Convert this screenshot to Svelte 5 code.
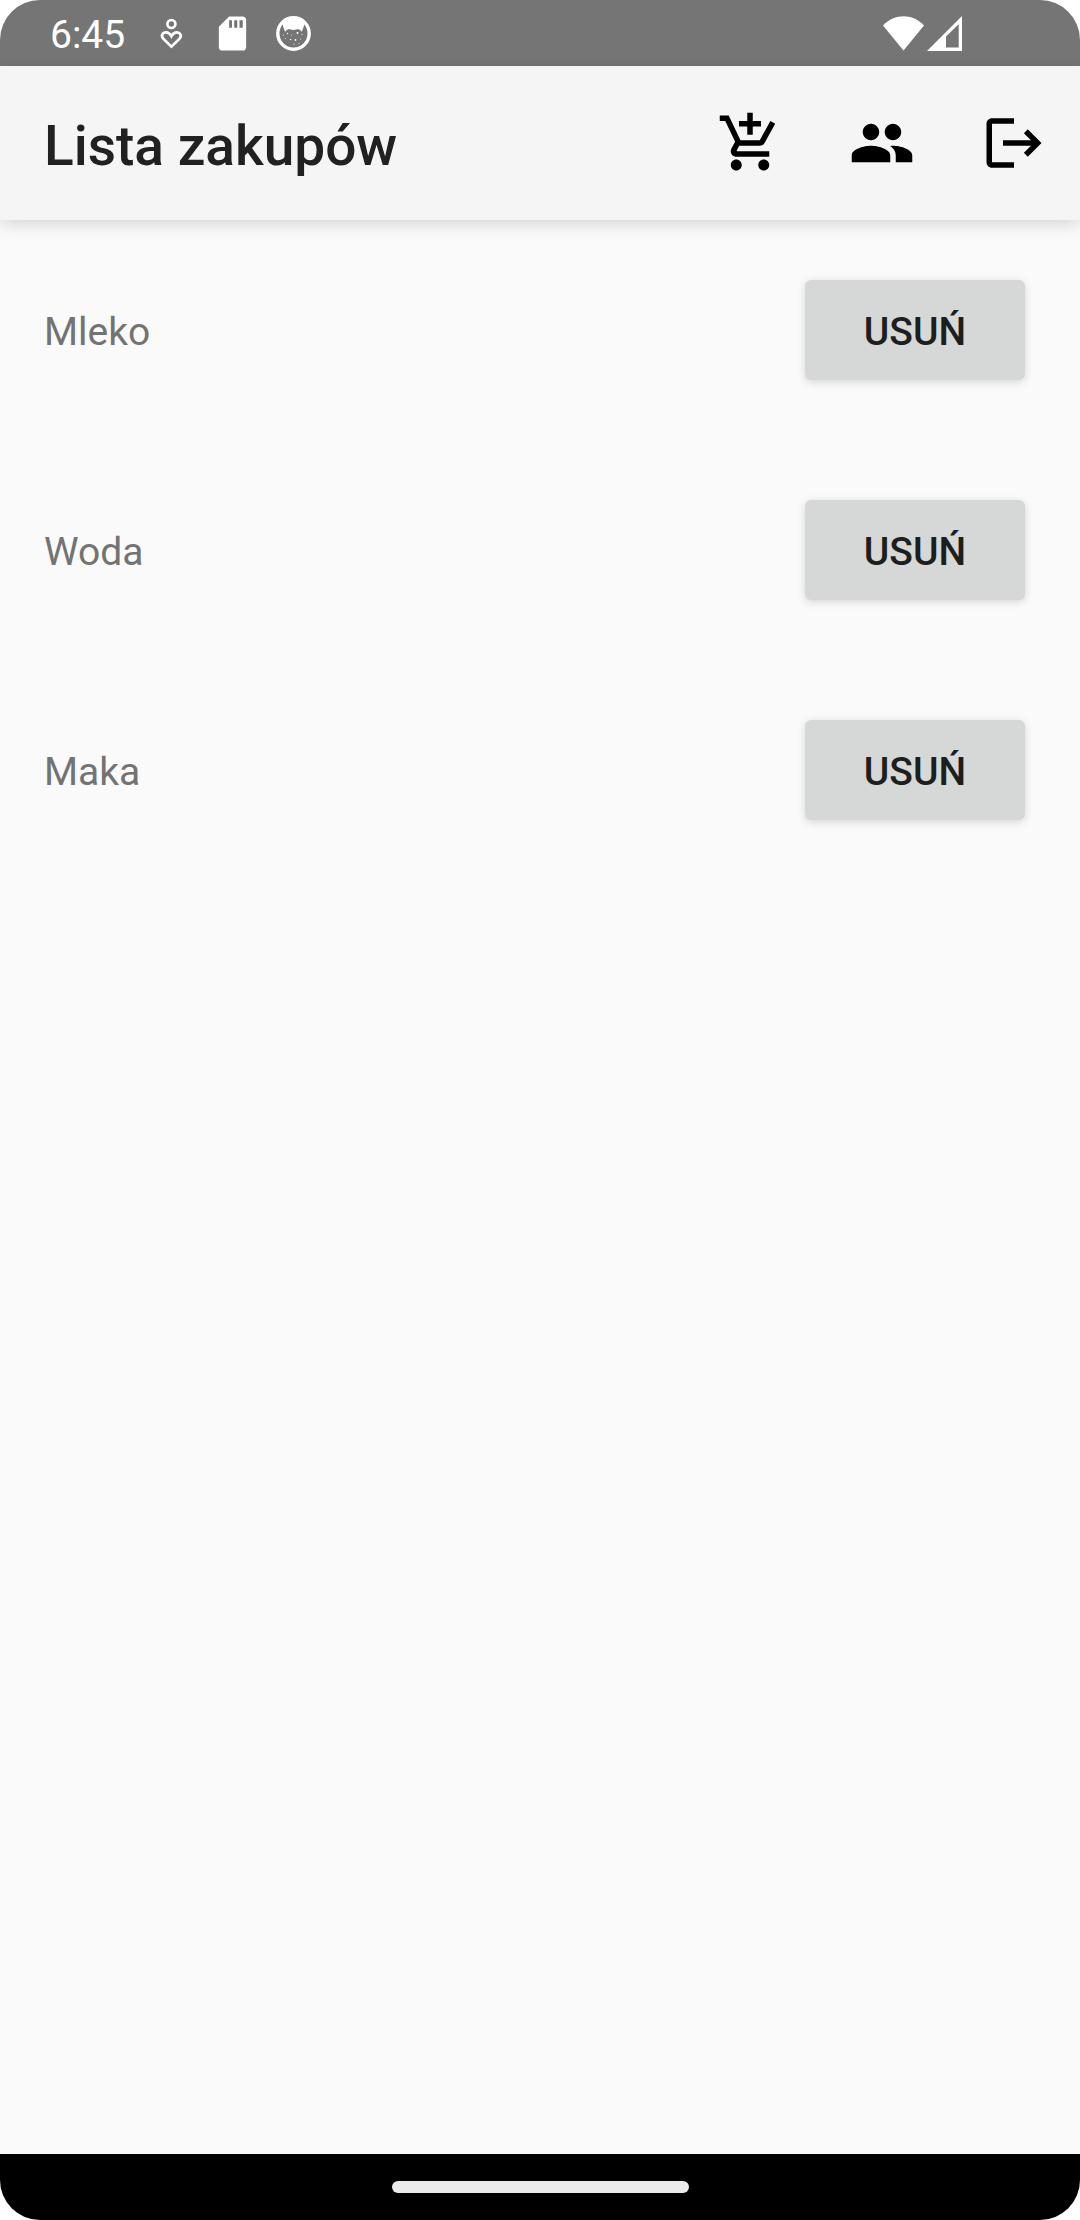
<script>
  let items = $state([
    { id: 1, name: 'Mleko' },
    { id: 2, name: 'Woda' },
    { id: 3, name: 'Maka' }
  ]);

  function remove(id) {
    items = items.filter((item) => item.id !== id);
  }
</script>

<div class="screen">
  <div class="status">
    <time class="clock">6:45</time>
    <div class="notices">
      <svg viewBox="0 0 41 41" aria-hidden="true">
        <g fill="none" stroke="#fff" stroke-width="2.7">
          <circle cx="20.4" cy="11" r="4" />
          <path d="M20.4 33.6L12.2 25.7C9.6 22.500 11.600 19.400 15 19.400C17.400 19.400 19.200 21 20.400 23.200C21.600 21 23.400 19.400 25.800 19.400C29.200 19.400 31.200 22.500 28.600 25.700Z" />
        </g>
      </svg>
      <svg viewBox="0 0 24 24" aria-hidden="true">
        <path fill="#fff" d="M18 2h-8L4 8v12c0 1.100.9 2 2 2h12c1.100 0 2-.9 2-2V4c0-1.100-.9-2-2-2zM11.700 8.700h-1.700V4.300h1.700zM14.800 8.700h-1.800V4.300h1.800zM18 8.700h-1.900V4.300h1.900z" />
      </svg>
      <svg viewBox="0 0 41 41" aria-hidden="true">
        <circle cx="20.500" cy="20.500" r="15.700" fill="none" stroke="#fff" stroke-width="3.400" />
        <path fill="#fff" d="M9.500 11Q10.500 15 12 18.800Q14 16.200 16.500 16L17.500 16.600Q20.500 17.400 23.500 16.600L24.500 16Q27 16.200 28.700 18.800Q30.500 15 31.500 11L26 6H15Z" />
        <g fill="#fff">
          <circle cx="14.500" cy="20.500" r=".7" />
          <circle cx="24.500" cy="20" r="1" />
          <circle cx="18.500" cy="22" r=".5" />
          <circle cx="29" cy="21.500" r=".6" />
          <circle cx="10.500" cy="22" r=".5" />
          <circle cx="12.500" cy="25.500" r=".5" />
          <circle cx="17.500" cy="26.500" r=".7" />
          <circle cx="22.500" cy="27" r=".9" />
          <circle cx="27.500" cy="26" r=".5" />
          <circle cx="21" cy="31" r=".6" />
          <circle cx="26" cy="30.500" r=".5" />
        </g>
      </svg>
    </div>
    <div class="signals">
      <svg class="wifi" viewBox="0 0 41 35" aria-hidden="true">
        <path fill="#fff" d="M20.500 34.500L0 9.500C11.500-2.800 29.500-2.800 41 9.500Z" />
      </svg>
      <svg class="cell" viewBox="0 0 35 35" aria-hidden="true">
        <path fill="#fff" fill-rule="evenodd" d="M0 35L35 0V35ZM19 20.500V31.500H31.700V8.300Z" />
      </svg>
    </div>
  </div>

  <header class="bar">
    <h1>Lista zakupów</h1>
    <button class="action" aria-label="Dodaj produkt">
      <svg viewBox="0 0 24 24" aria-hidden="true">
        <path d="M11 9h2V6h3V4h-3V1h-2v3H8v2h3v3zm-4 9c-1.100 0-1.990.9-1.990 2S5.900 22 7 22s2-.9 2-2-.9-2-2-2zm10 0c-1.100 0-1.990.9-1.990 2s.89 2 1.990 2 2-.9 2-2-.9-2-2-2zm-9.830-3.250l.03-.12.900-1.630h7.450c.75 0 1.410-.41 1.750-1.030l3.860-7.010L19.420 4h-.01l-1.100 2-2.760 5H8.530l-.13-.27L6.160 6l-.95-2-.94-2H1v2h2l3.600 7.590-1.350 2.450c-.16.28-.25.61-.25.96 0 1.100.9 2 2 2h12v-2H7.420c-.13 0-.25-.11-.25-.25z" />
      </svg>
    </button>
    <button class="action" aria-label="Użytkownicy">
      <svg viewBox="0 0 24 24" aria-hidden="true">
        <path d="M16 11c1.660 0 2.990-1.340 2.990-3S17.660 5 16 5s-3 1.340-3 3 1.340 3 3 3zm-8 0c1.660 0 2.990-1.340 2.990-3S9.660 5 8 5 5 6.340 5 8s1.340 3 3 3zm0 2c-2.330 0-7 1.170-7 3.500V19h14v-2.500c0-2.330-4.670-3.500-7-3.500zm8 0c-.29 0-.62.02-.97.05 1.160.84 1.970 1.970 1.970 3.450V19h6v-2.500c0-2.330-4.670-3.500-7-3.500z" />
      </svg>
    </button>
    <button class="action" aria-label="Wyloguj">
      <svg viewBox="0 0 24 24" aria-hidden="true">
        <path d="M17 7l-1.410 1.410L18.170 11H8v2h10.170l-2.580 2.580L17 17l5-5zM4 5h8V3H4c-1.100 0-2 .9-2 2v14c0 1.100.9 2 2 2h8v-2H4V5z" />
      </svg>
    </button>
  </header>

  <main>
    <ul>
      {#each items as item (item.id)}
        <li>
          <span class="name">{item.name}</span>
          <button class="remove" onclick={() => remove(item.id)}>USUŃ</button>
        </li>
      {/each}
    </ul>
  </main>

  <footer>
    <div class="handle"></div>
  </footer>
</div>

<style>
  :global(body) {
    margin: 0;
    background: #fff;
  }

  .screen {
    display: flex;
    flex-direction: column;
    min-height: 100vh;
    border-radius: 40px;
    overflow: hidden;
    background: #fafafa;
    font-family: Roboto, 'Liberation Sans', sans-serif;
    font-size: 39px;
    line-height: 48px;
  }

  svg {
    display: block;
  }

  button {
    border: 0;
    padding: 0;
    font: inherit;
    cursor: pointer;
  }

  .status {
    display: flex;
    align-items: center;
    height: 66px;
    padding: 0 118px 0 50px;
    background: #757575;
    color: #fff;
  }

  .clock,
  .name {
    padding-top: 4px;
  }

  .notices {
    display: flex;
    gap: 20px;
    margin-left: 26px;
  }

  .notices svg {
    width: 41px;
    height: 41px;
  }

  .signals {
    display: flex;
    gap: 3px;
    margin-left: auto;
  }

  .wifi {
    width: 41px;
    height: 35px;
  }

  .cell {
    width: 35px;
    height: 35px;
  }

  .bar {
    display: flex;
    align-items: center;
    height: 154px;
    padding-left: 44px;
    background: #f5f5f5;
    box-shadow: 0 4px 16px rgba(0, 0, 0, 0.15);
  }

  h1 {
    flex: 1;
    margin: 0;
    padding-top: 6px;
    font-size: 55px;
    line-height: 64px;
    font-weight: 500;
    color: #212121;
  }

  .action {
    display: flex;
    align-items: center;
    justify-content: center;
    width: 132px;
    height: 132px;
    background: none;
  }

  .action svg {
    width: 66px;
    height: 66px;
  }

  main {
    flex: 1;
  }

  ul {
    list-style: none;
    margin: 0;
    padding: 0;
  }

  li {
    display: flex;
    align-items: center;
    justify-content: space-between;
    height: 220px;
    padding: 0 55px 0 44px;
    color: #737373;
  }

  .remove {
    width: 220px;
    height: 100px;
    padding-top: 4px;
    border-radius: 6px;
    background: #d6d8d7;
    box-shadow: 0 2px 8px rgba(0, 0, 0, 0.15);
    color: #1d1e1e;
    font-weight: 500;
  }

  footer {
    display: flex;
    align-items: center;
    justify-content: center;
    height: 66px;
    background: #000;
  }

  .handle {
    width: 297px;
    height: 12px;
    border-radius: 6px;
    background: #ebebeb;
  }
</style>
